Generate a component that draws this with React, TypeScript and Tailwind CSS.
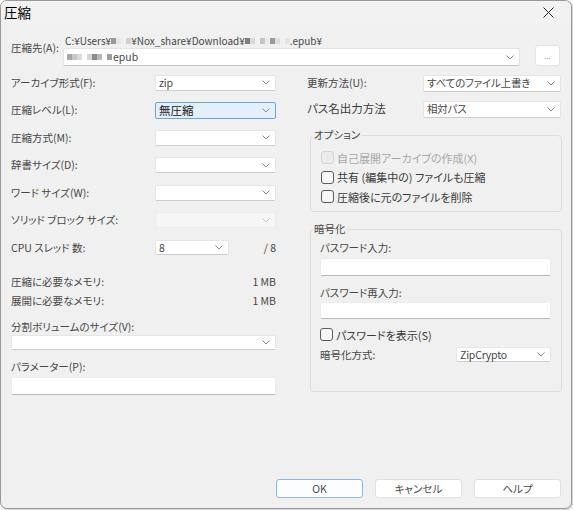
import * as React from 'react';

const FONT = "font-['Noto_Sans_CJK_JP','Noto_Sans',sans-serif] [font-feature-settings:'palt']";

const Chevron = ({ light = false }: { light?: boolean }) => (
  <svg width="8" height="5" viewBox="0 0 8 5" className="shrink-0">
    <path d="M0.5 0.5 L4 4 L7.5 0.5" fill="none" stroke={light ? '#c8c8c8' : '#8a8a8a'} strokeWidth="1" />
  </svg>
);

interface SelectProps {
  value?: React.ReactNode;
  className?: string;
  active?: boolean;
  disabled?: boolean;
}

const Select: React.FC<SelectProps> = ({ value, className = '', active = false, disabled = false }) => {
  const skin = active
    ? 'bg-[#e3effa] border-[#6ea5d8]'
    : disabled
    ? 'bg-[#f6f6f6] border-[#ececec]'
    : 'bg-white border-[#e6e6e6] border-b-[#cdcdcd]';
  return (
    <div className={`flex items-center justify-between border rounded-[2px] pl-[3px] pr-[5px] ${skin} ${className}`}>
      <span className={active ? 'text-[11.5px] text-[#1a1a1a]' : 'text-[10.5px] text-[#474747] whitespace-nowrap tracking-[-0.2px]'}>{value}</span>
      <Chevron light={disabled} />
    </div>
  );
};

const Input = ({ className = '' }: { className?: string }) => (
  <div className={`bg-white border border-[#ececec] border-b-[#b8b8b8] rounded-[2px] ${className}`} />
);

const Check = ({ label, disabled = false }: { label: string; disabled?: boolean }) => (
  <div className="flex items-center gap-[3px] h-[19.5px]">
    <div
      className={`w-[13px] h-[13px] rounded-[3px] border ${
        disabled ? 'border-[#d4d4d4] bg-[#ebebeb]' : 'border-[#5c5c5c] bg-[#f7f7f7]'
      }`}
    />
    <span className={`text-[11px] ${disabled ? 'text-[#a8a8a8]' : 'text-[#3a3a3a]'}`}>{label}</span>
  </div>
);

const Mosaic = ({ cells }: { cells: string[] }) => (
  <span className="inline-flex items-center h-[10px] align-middle">
    {cells.map((c, i) => (
      <span key={i} className="inline-block w-[5px] h-[6px]" style={{ backgroundColor: c }} />
    ))}
  </span>
);

const Row = ({ label, children }: { label: string; children: React.ReactNode }) => (
  <div className="flex items-center h-[27.5px]">
    <span className="w-[144px] text-[10.5px] text-[#474747]">{label}</span>
    {children}
  </div>
);

const Group = ({ title, className = '', children }: { title: string; className?: string; children?: React.ReactNode }) => (
  <div className={`relative border border-[#dcdcdc] rounded-[4px] ml-[3px] w-[252px] ${className}`}>
    <span className="absolute -top-[8px] left-[2px] bg-[#f0f0f0] px-[1px] text-[10.5px] leading-[14px] text-[#474747]">{title}</span>
    {children}
  </div>
);

const Button = ({ label, primary = false }: { label: string; primary?: boolean }) => (
  <div
    className={`w-[87px] h-[19px] flex items-center justify-center rounded-[3px] border text-[10.5px] text-[#4a4a4a] ${
      primary ? 'border-[#8db9e2] bg-[#fbfdff]' : 'border-[#e0e0e0] bg-white'
    }`}
  >
    {label}
  </div>
);

export default function App() {
  return (
    <div className={`w-[573px] h-[510px] bg-white ${FONT}`}>
      <div className="w-[572px] h-[509px] flex flex-col bg-[#f0f0f0] border border-[#9a9a9a] rounded-[7px] overflow-hidden shadow-[1px_1px_3px_rgba(0,0,0,0.25)]">
        {/* title bar */}
        <div className="h-[23px] flex items-center justify-between pl-[3px] pr-[17px] bg-[#f2f2f2]">
          <span className="text-[13.5px] text-black">圧縮</span>
          <svg width="11" height="11" viewBox="0 0 11 11">
            <path d="M0.5 0.5 L10.5 10.5 M10.5 0.5 L0.5 10.5" stroke="#222" strokeWidth="1" />
          </svg>
        </div>

        <div className="flex-1 flex flex-col pl-[10px] pr-[10px]">
          {/* destination */}
          <div className="flex mt-[10px]">
            <span className="w-[52px] mt-[6px] text-[10.5px] text-[#474747]">圧縮先(A):</span>
            <div className="flex flex-col">
              <div className="h-[13px] flex items-center text-[10px] text-[#474747] leading-none pl-[2px]">
                C:¥Users¥
                <Mosaic cells={['#9a9a9a', '#e6e6e6', '#f0f0f0', '#cfcfcf']} />
                ¥Nox_share¥Download¥
                <Mosaic cells={['#7d7d7d', '#d8d8d8', '#f0f0f0', '#c4c4c4', '#ececec', '#9a9a9a', '#dddddd', '#f0f0f0', '#e4e4e4']} />
                .epub¥
              </div>
              <div className="w-[457px] h-[18px] mt-[1px] flex items-center justify-between bg-white border border-[#e4e4e4] border-b-[#c4c4c4] rounded-[2px] pl-[3px] pr-[5px]">
                <span className="flex items-center text-[10.5px] text-[#474747]">
                  <Mosaic cells={['#a8a8a8', '#c8c8c8', '#dadada', '#ffffff', '#d6d6d6', '#8c8c8c', '#b8b8b8', '#ffffff', '#9e9e9e']} />
                  <span className="ml-[1px]">epub</span>
                </span>
                <Chevron />
              </div>
            </div>
            <div className="ml-[15px] mt-[11px] w-[25px] h-[21px] flex items-center justify-center bg-white border border-[#e4e4e4] rounded-[3px] text-[8px] text-[#999]">
              ...
            </div>
          </div>

          {/* two columns */}
          <div className="flex mt-[3px]">
            {/* left */}
            <div className="w-[265px] flex flex-col">
              <Row label="アーカイブ形式(F):">
                <Select value="zip" className="w-[121px] h-[16px]" />
              </Row>
              <Row label="圧縮レベル(L):">
                <Select value="無圧縮" active className="w-[121px] h-[17px]" />
              </Row>
              <Row label="圧縮方式(M):">
                <Select className="w-[121px] h-[16px]" />
              </Row>
              <Row label="辞書サイズ(D):">
                <Select className="w-[121px] h-[16px]" />
              </Row>
              <Row label="ワード サイズ(W):">
                <Select className="w-[121px] h-[16px]" />
              </Row>
              <Row label="ソリッド ブロック サイズ:">
                <Select disabled className="w-[121px] h-[16px]" />
              </Row>
              <Row label="CPU スレッド 数:">
                <Select value="8" className="w-[74px] h-[15px]" />
                <span className="ml-auto text-[10.5px] text-[#474747]">/ 8</span>
              </Row>

              <div className="flex flex-col mt-[11px] text-[10.5px] text-[#474747]">
                <div className="flex items-center justify-between h-[19px]">
                  <span>圧縮に必要なメモリ:</span>
                  <span>1 MB</span>
                </div>
                <div className="flex items-center justify-between h-[19px]">
                  <span>展開に必要なメモリ:</span>
                  <span>1 MB</span>
                </div>
              </div>

              <span className="mt-[8px] h-[16px] flex items-center text-[10.5px] text-[#474747]">分割ボリュームのサイズ(V):</span>
              <Select className="w-[265px] h-[15px]" />
              <span className="mt-[9px] h-[16px] flex items-center text-[10.5px] text-[#474747]">パラメーター(P):</span>
              <Input className="w-[265px] h-[18px] mt-[2px]" />
            </div>

            {/* right */}
            <div className="ml-[31px] w-[255px] flex flex-col">
              <div className="flex items-center h-[28px]">
                <span className="w-[116px] text-[10.5px] text-[#474747]">更新方法(U):</span>
                <Select value="すべてのファイル上書き" className="w-[138px] h-[17px]" />
              </div>
              <div className="flex items-center h-[24px]">
                <span className="w-[116px] text-[11.5px] text-[#3a3a3a]">パス名出力方法</span>
                <Select value="相対パス" className="w-[138px] h-[17px]" />
              </div>

              <Group title="オプション" className="mt-[14px] h-[77px] pl-[10px] pt-[12px]">
                <Check label="自己展開アーカイブの作成(X)" disabled />
                <Check label="共有 (編集中の) ファイルも圧縮" />
                <Check label="圧縮後に元のファイルを削除" />
              </Group>

              <Group title="暗号化" className="mt-[17px] h-[163px] pl-[9px] pt-[9px] flex flex-col">
                <span className="h-[17px] flex items-center text-[10.5px] text-[#474747]">パスワード入力:</span>
                <Input className="w-[231px] h-[18px] mt-[2px]" />
                <span className="mt-[8px] h-[17px] flex items-center text-[10.5px] text-[#474747]">パスワード再入力:</span>
                <Input className="w-[231px] h-[17px] mt-[1px]" />
                <div className="mt-[6px]">
                  <Check label="パスワードを表示(S)" />
                </div>
                <div className="flex items-center h-[18px] mt-[1px]">
                  <span className="w-[136px] text-[10.5px] text-[#474747]">暗号化方式:</span>
                  <Select value="ZipCrypto" className="w-[95px] h-[15px]" />
                </div>
              </Group>
            </div>
          </div>

          {/* buttons */}
          <div className="mt-auto mb-[10px] flex justify-end gap-[12px]">
            <Button label="OK" primary />
            <Button label="キャンセル" />
            <Button label="ヘルプ" />
          </div>
        </div>
      </div>
    </div>
  );
}
